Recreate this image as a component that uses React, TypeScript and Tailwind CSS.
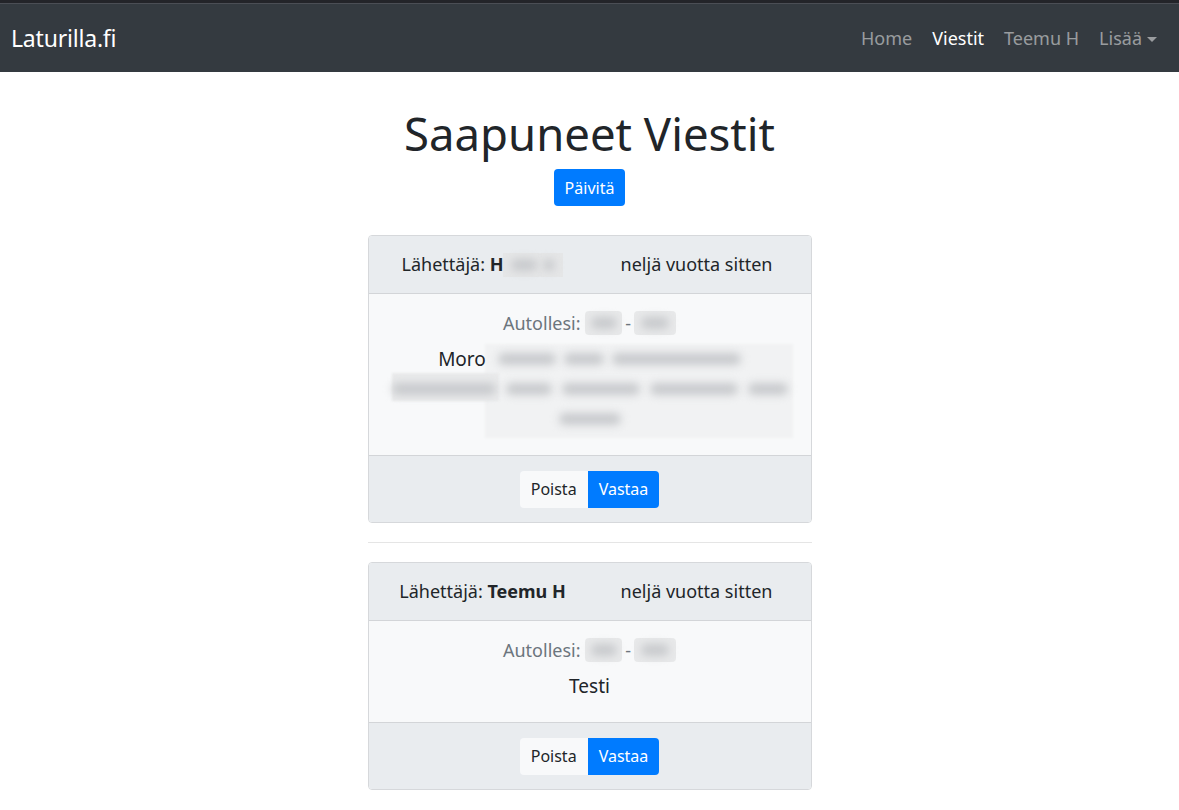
import { ReactNode } from 'react'

function Smudge({ w, className = '' }: { w: string; className?: string }) {
  return <span className={`inline-block h-[12px] rounded-full bg-[#c8cacd] blur-[4px] align-middle ${w} ${className}`} />
}

function Plate() {
  return (
    <span className="inline-flex items-center align-top h-[28px]">
      <span className="bg-[#e8e9ea] rounded-sm w-[37px] h-[24px] inline-flex items-center justify-center">
        <Smudge w="w-[26px]" />
      </span>
      <span className="px-[3px]">-</span>
      <span className="bg-[#e8e9ea] rounded-sm w-[42px] h-[24px] inline-flex items-center justify-center">
        <Smudge w="w-[28px]" />
      </span>
    </span>
  )
}

function MessageCard({ sender, body }: { sender: ReactNode; body: ReactNode }) {
  return (
    <div className="w-[444px] mx-auto border border-[#d6d8db] rounded-[4px] overflow-hidden">
      <div className="bg-[#e9ecef] border-b border-[#d3d5d8] h-[58px] grid grid-cols-2 items-center pl-[10px] pr-[16px] text-[18px] text-[#212529]">
        <div className="text-center">{sender}</div>
        <div className="text-center pl-[12px]">neljä vuotta sitten</div>
      </div>
      <div className="bg-[#f8f9fa] px-5 pt-[15px] pb-[21px] text-center">
        <div className="text-[18px] text-[#6c757d] leading-[28px]">
          Autollesi: <Plate />
        </div>
        <div className="text-[19px] text-[#212529] leading-[30px] mt-[7px]">{body}</div>
      </div>
      <div className="bg-[#e9ecef] border-t border-[#d3d5d8] h-[67px] flex items-center justify-center">
        <div className="flex">
          <button className="bg-[#f8f9fa] text-[#212529] text-[16px] h-[37px] px-[11px] rounded-l-[4px]">Poista</button>
          <button className="bg-[#007bff] text-white text-[16px] h-[37px] px-[11px] rounded-r-[4px]">Vastaa</button>
        </div>
      </div>
    </div>
  )
}

export default function App() {
  return (
    <div className="min-h-screen bg-white font-['Noto_Sans',sans-serif]">
      <div className="h-1 bg-[#232429] border-b border-[#4b4e55]" />
      <nav className="bg-[#343a40] h-[68px] flex items-center justify-between pl-[11px] pr-[22px]">
        <a className="text-white text-[23px] tracking-[-0.2px]">Laturilla.fi</a>
        <div className="flex items-center gap-[20px] text-[18px]">
          <a className="text-white/50">Home</a>
          <a className="text-white">Viestit</a>
          <a className="text-white/50">Teemu H</a>
          <a className="text-white/50 flex items-center gap-[5px]">
            Lisää
            <span className="w-0 h-0 border-l-[5px] border-r-[5px] border-t-[5px] border-l-transparent border-r-transparent border-t-white/50 mt-[2px]" />
          </a>
        </div>
      </nav>

      <main className="pt-[33px] pb-10 text-center">
        <h1 className="text-[45.5px] leading-[56px] text-[#212529]">Saapuneet Viestit</h1>
        <button className="mt-[8px] bg-[#007bff] text-white text-[16px] h-[37px] px-[11px] rounded-[4px]">Päivitä</button>

        <div className="mt-[29px] text-left">
          <MessageCard
            sender={
              <span className="inline-flex items-center">
                Lähettäjä:&nbsp;<b className="font-bold">H</b>
                <span className="bg-[#e5e6e7] inline-flex items-center justify-center gap-[6px] w-[60px] h-[24px]">
                  <Smudge w="w-[26px]" className="bg-[#b9bbbe]" />
                  <Smudge w="w-[12px]" className="bg-[#b9bbbe]" />
                </span>
              </span>
            }
            body={
              <div className="relative">
                <div className="absolute left-[96px] top-0 w-[308px] h-[94px] bg-[#f1f2f3] blur-[1px]" />
                <div className="absolute left-[3px] top-[29px] w-[107px] h-[28px] bg-[#e9eaeb] blur-[1px]" />
                <div className="relative">
                  <div className="whitespace-nowrap flex items-center justify-center h-[30px]">
                    Moro
                    <span className="ml-[12px] flex gap-[8px] w-[243px]">
                      <Smudge w="w-[58px]" />
                      <Smudge w="w-[40px]" />
                      <Smudge w="w-[129px]" />
                    </span>
                  </div>
                  <div className="flex items-center justify-center gap-[10px] h-[30px]">
                    <Smudge w="w-[104px]" className="bg-[#c0c2c5]" />
                    <Smudge w="w-[46px]" />
                    <Smudge w="w-[78px]" />
                    <Smudge w="w-[88px]" />
                    <Smudge w="w-[40px]" />
                  </div>
                  <div className="flex items-center justify-center h-[30px]">
                    <Smudge w="w-[62px]" />
                  </div>
                </div>
              </div>
            }
          />
          <hr className="w-[444px] mx-auto my-[19px] border-0 border-t border-black/10" />
          <MessageCard
            sender={
              <span>
                Lähettäjä: <b className="font-bold">Teemu H</b>
              </span>
            }
            body={<div>Testi</div>}
          />
        </div>
      </main>
    </div>
  )
}
